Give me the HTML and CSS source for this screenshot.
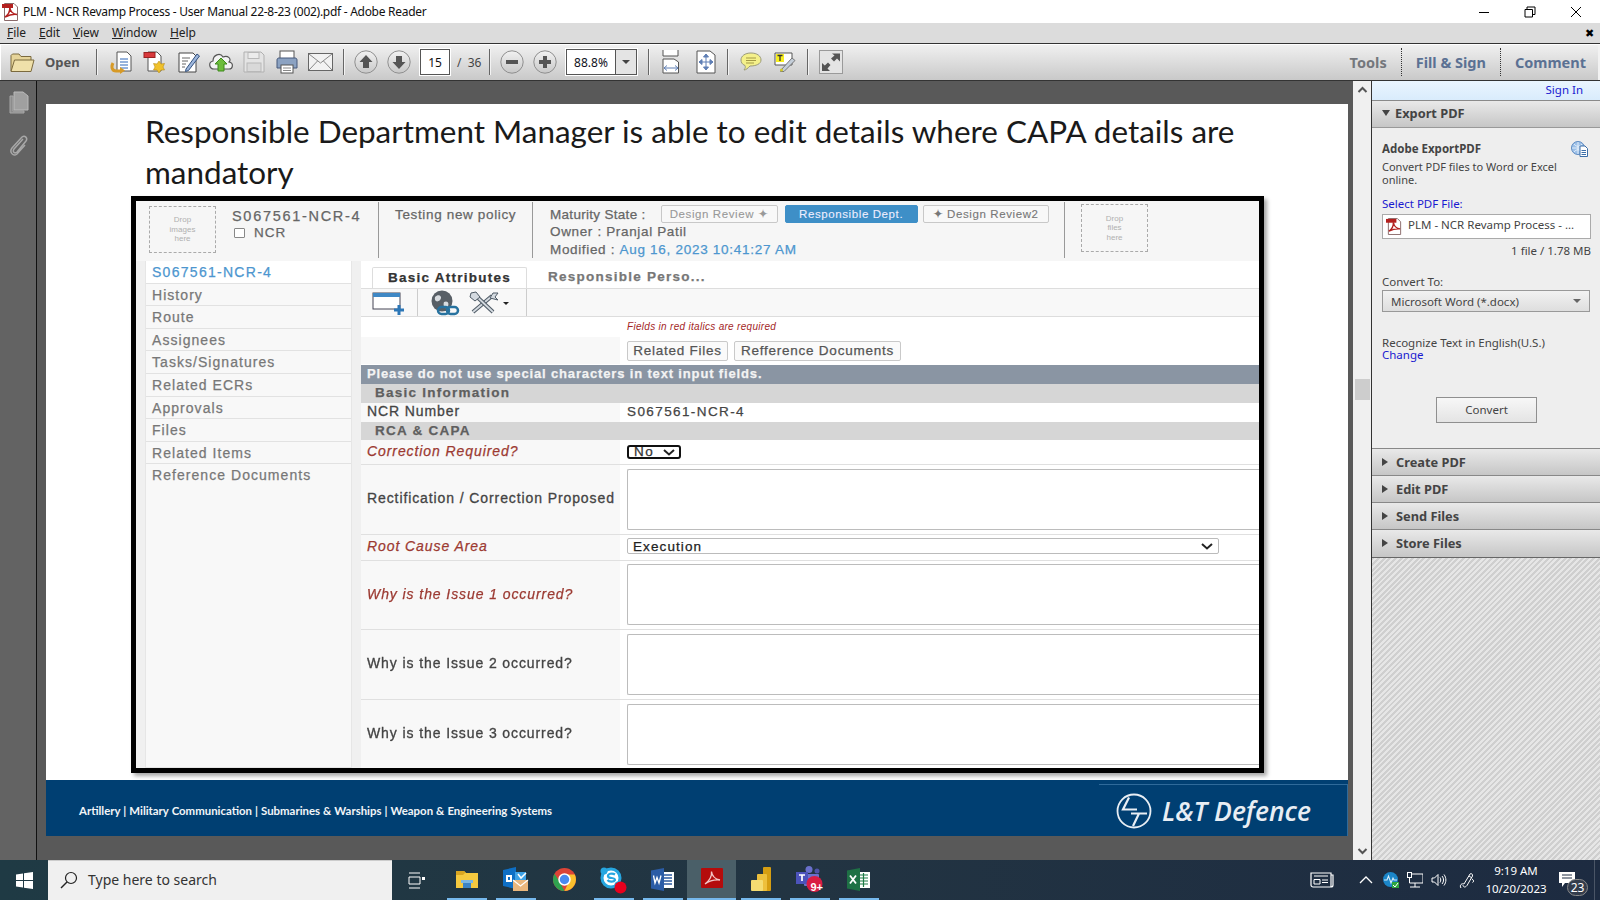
FILE: index.html
```html
<!DOCTYPE html>
<html lang="en">
<head>
<meta charset="utf-8">
<title>Adobe Reader</title>
<link rel="stylesheet" href="styles.css">
</head>
<body>
<svg class="defs" width="0" height="0">
  <defs>
    <symbol id="pdfdoc" viewBox="0 0 18 18">
      <path d="M2.5 .5H12L15.5 4V17.5H2.5Z" fill="#fff" stroke="#8a6a6a"/>
      <rect x="0" y="1" width="11" height="4" fill="#b3201f"/>
      <path d="M3 14C6 12 8 8 7.800 4.500C8.500 9 11 11 15 11.500C11 11 6 12.500 3 14Z" fill="none" stroke="#b3201f" stroke-width="1.500"/>
    </symbol>
    <symbol id="tray-circle" viewBox="0 0 24 24">
      <circle cx="12" cy="12" r="11.200" fill="url(#circ)" stroke="#8f8f8f" stroke-width="1"/>
    </symbol>
    <linearGradient id="circ" x1="0" y1="0" x2="0" y2="1"><stop offset="0" stop-color="#f2f2f2"/><stop offset="1" stop-color="#c8c8c8"/></linearGradient>
  </defs>
</svg>

<header class="titlebar">
  <svg class="title-icon" width="18" height="18"><use href="#pdfdoc"/></svg>
  <span class="title-text">PLM - NCR Revamp Process - User Manual 22-8-23 (002).pdf - Adobe Reader</span>
  <div class="winctl">
    <svg width="12" height="12" viewBox="0 0 12 12"><path d="M1 6.500H11" stroke="#000"/></svg>
    <svg width="12" height="12" viewBox="0 0 12 12"><path d="M3 3V1H11V8.500H9M1 3.500H8.500V11H1Z" fill="none" stroke="#000"/></svg>
    <svg width="12" height="12" viewBox="0 0 12 12"><path d="M1 1L11 11M11 1L1 11" stroke="#000"/></svg>
  </div>
</header>

<nav class="menubar">
  <span class="menu m-file"><u>F</u>ile</span>
  <span class="menu m-edit"><u>E</u>dit</span>
  <span class="menu m-view"><u>V</u>iew</span>
  <span class="menu m-window"><u>W</u>indow</span>
  <span class="menu m-help"><u>H</u>elp</span>
  <span class="menu-close">✖</span>
</nav>

<div class="toolbar">
  <div class="g-open">
    <svg width="25" height="21" viewBox="0 0 25 21"><path d="M1 19V3.500L2.500 2H9L11 4.500H21V8" fill="#e6d49a" stroke="#7b6a3e"/><path d="M1 19.500L4.500 8H24L21 19.500Z" fill="#efe0aa" stroke="#7b6a3e"/></svg>
    <span class="open-label">Open</span>
  </div>
  <i class="sep"></i>
  <div class="g-file">
    <span class="tbtn"><svg width="24" height="24" viewBox="0 0 24 24"><path d="M7 2H17L21 6V21H7Z" fill="#fff" stroke="#555"/><path d="M10 9H18M10 12H18M10 15H18M10 18H18" stroke="#2f66b8"/><path d="M11 21H6C2 21 1 17 3 13" fill="none" stroke="#d79a27" stroke-width="3"/><path d="M10 17V24L15 20.500Z" fill="#d79a27"/></svg></span>
    <span class="tbtn"><svg width="24" height="24" viewBox="0 0 24 24"><path d="M5 2H14L18 6V21H5Z" fill="#fff" stroke="#555"/><rect x="1" y="2.500" width="11" height="5" fill="#d8393c" stroke="#922"/><path d="M16 11L18 14L21.500 13.500L20 17L21.500 20L18 20L16 23L14 20L10.500 20L12 17L10.500 13.500L14 14Z" fill="#f0c12b" stroke="#b98d14" stroke-width=".6"/></svg></span>
    <span class="tbtn"><svg width="24" height="24" viewBox="0 0 24 24"><path d="M3 3H17L20 6V22H3Z" fill="#fff" stroke="#444"/><path d="M6 8H14M6 11H12M6 14H10M6 17H9" stroke="#666"/><path d="M10 19L21 4L23.500 6L12.500 20.500L9.500 21.500Z" fill="#9db6dc" stroke="#33527f"/></svg></span>
    <span class="tbtn"><svg width="26" height="24" viewBox="0 0 26 24"><path d="M6 19C1 19 0 12 5 11C5 5 12 2 15 7C20 5 24 9 21 12C26 13 25 19 21 19Z" fill="#f4f4f4" stroke="#555" stroke-width="1.200"/><path d="M13 8L19 14H16V21H10V14H7Z" fill="#6dbd3c" stroke="#3e8a1c"/></svg></span>
    <span class="tbtn"><svg width="22" height="22" viewBox="0 0 22 22"><path d="M1 1H18L21 4V21H1Z" fill="#e4e4e4" stroke="#b0b0b0"/><rect x="5" y="1.500" width="11" height="6" fill="#ececec" stroke="#b8b8b8"/><rect x="4" y="12" width="14" height="8.500" fill="#d9d9d9" stroke="#b8b8b8"/></svg></span>
    <span class="tbtn"><svg width="24" height="24" viewBox="0 0 24 24"><rect x="5" y="1" width="14" height="9" fill="#fff" stroke="#555"/><path d="M2 10C2 8.500 3 8 4 8H20C21 8 22 8.500 22 10V18H2Z" fill="#8ba2c2" stroke="#46597a"/><rect x="6" y="15" width="12" height="8" fill="#fff" stroke="#555"/><path d="M8 18H16M8 20.500H16" stroke="#888"/></svg></span>
    <span class="tbtn"><svg width="25" height="18" viewBox="0 0 25 18"><rect x=".5" y=".5" width="24" height="17" fill="#f2f2f2" stroke="#666"/><path d="M1 1L12.500 10L24 1M1 17L9.500 8M24 17L15.500 8" fill="none" stroke="#888"/></svg></span>
  </div>
  <i class="sep"></i>
  <div class="g-nav">
    <svg width="24" height="24" viewBox="0 0 24 24"><use href="#tray-circle"/><path d="M12 5L18.500 12H15V18H9V12H5.500Z" fill="#555"/></svg>
    <svg width="24" height="24" viewBox="0 0 24 24"><use href="#tray-circle"/><path d="M12 19L18.500 12H15V6H9V12H5.500Z" fill="#555"/></svg>
    <span class="pagebox">15</span>
    <span class="pagecount">/ &nbsp;36</span>
  </div>
  <i class="sep"></i>
  <div class="g-zoom">
    <svg width="24" height="24" viewBox="0 0 24 24"><use href="#tray-circle"/><rect x="6" y="10" width="12" height="4" fill="#555"/></svg>
    <svg width="24" height="24" viewBox="0 0 24 24"><use href="#tray-circle"/><path d="M10 6H14V10H18V14H14V18H10V14H6V10H10Z" fill="#555"/></svg>
    <div class="zoombox"><span class="zoomval">88.8%</span><span class="zoomdrop"><i class="caret"></i></span></div>
  </div>
  <i class="sep"></i>
  <div class="g-fit">
    <span class="tbtn"><svg width="18" height="24" viewBox="0 0 18 24"><path d="M1 0V6H16V0" fill="#fff" stroke="#555"/><path d="M1 9H12L16.500 12V23H1Z" fill="#fff" stroke="#555"/><path d="M2 18H16M2 18L5 15.500M2 18L5 20.500M16 18L13 15.500M16 18L13 20.500" stroke="#5f7fb5" fill="none"/></svg></span>
    <span class="tbtn"><svg width="20" height="24" viewBox="0 0 20 24"><path d="M1 1H14L19 5V23H1Z" fill="#fff" stroke="#555"/><path d="M10 4V20M3 12H17M10 4L7.500 7H12.500ZM10 20L7.500 17H12.500ZM3 12L6 9.500V14.500ZM17 12L14 9.500V14.500Z" fill="#5f7fb5" stroke="#5f7fb5"/></svg></span>
  </div>
  <i class="sep"></i>
  <div class="g-note">
    <span class="tbtn"><svg width="22" height="20" viewBox="0 0 22 20"><path d="M11 1C17 1 21 4 21 8C21 12 16 14 10 14C8 16 6 18 4 18C5.500 16 5.500 15 5 13.500C2 12.500 1 10 1 8C1 4 5 1 11 1Z" fill="#f4f08a" stroke="#9a9a7a"/><path d="M6 6H16M6 8.500H16M6 11H14" stroke="#a49a46"/></svg></span>
    <span class="tbtn"><svg width="22" height="20" viewBox="0 0 22 20"><path d="M1 1H18V13H1Z" fill="#fff" stroke="#555"/><rect x="2" y="2" width="8" height="8" fill="#f7ee1f"/><path d="M3.500 3.500H8.500M6 3.500V9" stroke="#333" stroke-width="1.300"/><path d="M7 18L18 6L21 8.500L10 19.500L6.500 19.500Z" fill="#c4ced9" stroke="#777"/><circle cx="7.500" cy="18" r="1.500" fill="#cfc52a"/></svg></span>
  </div>
  <i class="sep"></i>
  <span class="expand"><svg width="24" height="24" viewBox="0 0 24 24"><rect x=".5" y=".5" width="23" height="23" fill="#e4e4e4" stroke="#9a9a9a"/><path d="M13 3.500H21V11.500L18 8.500L15 11.500L12 8.500L15.500 5.500ZM3 21V13L5.800 15.500L9 12.500L11.500 15L8.500 18.500L11 21Z" fill="#555"/></svg></span>
  <div class="tabs-right">
    <span class="tr-link tr-tools">Tools</span>
    <i class="dots"></i>
    <span class="tr-link">Fill &amp; Sign</span>
    <i class="dots"></i>
    <span class="tr-link">Comment</span>
  </div>
</div>

<div class="main">
  <aside class="rail">
    <svg width="22" height="24" viewBox="0 0 22 24"><path d="M2 6H5V21H16V23H2Z" fill="#8c8c8c" stroke="#a8a8a8"/><path d="M6 2H15L20 6V20H6Z" fill="#a0a0a0" stroke="#bababa"/></svg>
    <svg width="22" height="24" viewBox="0 0 22 24"><path d="M15 6L6 16C4 19 7 21 9 19L18 8C20 5 17 2 14 4L4 15C1 19 5 24 9 21L17 12" fill="none" stroke="#a8a8a8" stroke-width="1.500"/></svg>
  </aside>

  <section class="docarea">
    <article class="page">
      <h1 class="heading">Responsible Department Manager is able to edit details where CAPA details are mandatory</h1>
      <figure class="shot">
        <div class="shot-inner">
          <div class="hdr">
            <div class="drop drop-img">Drop<br>images<br>here</div>
            <div class="idblock">
              <div class="idname">S067561-NCR-4</div>
              <div class="idtype"><i class="minidoc"></i>NCR</div>
            </div>
            <div class="desc">Testing new policy</div>
            <div class="state">
              <div class="state-row"><span class="state-label">Maturity State :</span>
                <span class="chip chip-a">Design Review ✦</span>
                <span class="chip chip-on">Responsible Dept.</span>
                <span class="chip chip-b">✦ Design Review2</span>
              </div>
              <div class="state-line">Owner : Pranjal Patil</div>
              <div class="state-line">Modified : <span class="blue">Aug 16, 2023 10:41:27 AM</span></div>
            </div>
            <div class="drop drop-file">Drop<br>files<br>here</div>
          </div>
          <div class="content">
            <ul class="sidenav">
              <li class="current">S067561-NCR-4</li>
              <li>History</li>
              <li>Route</li>
              <li>Assignees</li>
              <li>Tasks/Signatures</li>
              <li>Related ECRs</li>
              <li>Approvals</li>
              <li>Files</li>
              <li>Related Items</li>
              <li class="lastnav">Reference Documents</li>
            </ul>
            <div class="form">
              <div class="tabs">
                <span class="tab tab-on">Basic Attributes</span>
                <span class="tab tab-off">Responsible Perso...</span>
              </div>
              <div class="actions">
                <svg class="act1" width="33" height="26" viewBox="0 0 33 26"><rect x="1" y="3" width="27" height="16" fill="#fff" stroke="#445"/><rect x="1" y="3" width="27" height="4" fill="#3f88c5"/><path d="M22 20H32M27 15V25" stroke="#2c77b7" stroke-width="3"/></svg>
                <i class="act-sep act-sep1"></i>
                <svg class="act2" width="32" height="26" viewBox="0 0 32 26"><circle cx="14" cy="11" r="10.500" fill="#585f66"/><path d="M7 7C11 3 15 7 12 10C9 13 6 11 7 7ZM16 12C20 10 22 14 19 18C16 19 15 15 16 12Z" fill="#d8dce0"/><rect x="10" y="17" width="11" height="7" rx="3.500" fill="none" stroke="#27729f" stroke-width="2.500"/><rect x="19" y="17" width="11" height="7" rx="3.500" fill="none" stroke="#27729f" stroke-width="2.500"/></svg>
                <svg class="act3" width="42" height="24" viewBox="0 0 42 24"><path d="M5 21L24 5" stroke="#4f5b66" stroke-width="4"/><path d="M5 21L24 5" stroke="#d4dae0" stroke-width="1.800"/><path d="M6 3L25 21" stroke="#4f5b66" stroke-width="4"/><path d="M6 3L25 21" stroke="#d4dae0" stroke-width="1.800"/><path d="M3 2L8 1L12 6L7 10L2 6ZM22 7L25 2L30 2L27 6L30 9Z" fill="#d4dae0" stroke="#4f5b66"/><path d="M35 11H41L38 14Z" fill="#222"/></svg>
                <i class="act-sep act-sep2"></i>
              </div>
              <div class="req-row"><span class="req">Fields in red italics are required</span></div>
              <div class="btn-row">
                <span class="btn-cell"></span>
                <span class="sbtn sbtn-a">Related Files</span>
                <span class="sbtn sbtn-b">Refference Documents</span>
              </div>
              <div class="notice">Please do not use special characters in text input fields.</div>
              <div class="band">Basic Information</div>
              <div class="row r-ncr"><div class="lbl lbl-bold">NCR Number</div><div class="val">S067561-NCR-4</div></div>
              <div class="band">RCA &amp; CAPA</div>
              <div class="row r-cor"><div class="lbl lbl-red">Correction Required?</div><div class="val"><span class="sel-no">No<svg width="12" height="7" viewBox="0 0 12 7"><path d="M1 1L6 5.500L11 1" fill="none" stroke="#222" stroke-width="2"/></svg></span></div></div>
              <div class="row r-area"><div class="lbl lbl-bold">Rectification / Correction Proposed</div><div class="val"><span class="ta"></span></div></div>
              <div class="row r-root"><div class="lbl lbl-red">Root Cause Area</div><div class="val"><span class="sel-root">Execution<svg width="12" height="7" viewBox="0 0 12 7"><path d="M1 1L6 5.500L11 1" fill="none" stroke="#222" stroke-width="2"/></svg></span></div></div>
              <div class="row r-area"><div class="lbl lbl-red">Why is the Issue 1 occurred?</div><div class="val"><span class="ta"></span></div></div>
              <div class="row r-area"><div class="lbl lbl-bold">Why is the Issue 2 occurred?</div><div class="val"><span class="ta"></span></div></div>
              <div class="row r-area r-last"><div class="lbl lbl-bold">Why is the Issue 3 occurred?</div><div class="val"><span class="ta"></span></div></div>
            </div>
          </div>
        </div>
      </figure>
      <footer class="pagefoot">
        <span class="foot-text">Artillery | Military Communication | Submarines &amp; Warships | Weapon &amp; Engineering Systems</span>
        <div class="foot-logo">
          <svg width="36" height="36" viewBox="0 0 36 36"><circle cx="18" cy="18" r="16.500" fill="none" stroke="#e8eef4" stroke-width="1.800"/><path d="M13 4.500L7 16.500H21M15 20.500H31M23 20.500L17 33" fill="none" stroke="#e8eef4" stroke-width="2.200"/></svg>
          <span class="foot-brand">L&amp;T Defence</span>
        </div>
      </footer>
    </article>
  </section>

  <div class="vscroll">
    <svg width="11" height="8" viewBox="0 0 11 8"><path d="M1.500 6L5.500 2L9.500 6" fill="none" stroke="#555" stroke-width="2"/></svg>
    <i class="thumb"></i>
    <svg width="11" height="8" viewBox="0 0 11 8"><path d="M1.500 2L5.500 6L9.500 2" fill="none" stroke="#555" stroke-width="2"/></svg>
  </div>

  <aside class="panel">
    <div class="signin"><span>Sign In</span></div>
    <div class="sect sect-open"><i class="tri-down"></i>Export PDF</div>
    <div class="export">
      <div class="ex-head"><b>Adobe ExportPDF</b>
        <svg width="17" height="16" viewBox="0 0 17 16"><circle cx="7" cy="7" r="6.500" fill="#9cc0e8" stroke="#5d8ac0"/><path d="M1 7H13M7 1V13M3 3C5 6 9 6 11 3M3 11C5 8 9 8 11 11" fill="none" stroke="#fff" stroke-width=".7"/><path d="M9 5H14L16.500 7.500V15.500H9Z" fill="#fff" stroke="#3c6ea8"/><path d="M10.500 9.500H15M10.500 11.500H15M10.500 13.500H15" stroke="#3c6ea8"/></svg>
      </div>
      <p class="ex-desc">Convert PDF files to Word or Excel online.</p>
      <div class="ex-link ex-select">Select PDF File:</div>
      <div class="filebox"><svg width="17" height="17"><use href="#pdfdoc"/></svg><span>PLM - NCR Revamp Process - ...</span></div>
      <div class="filesize">1 file / 1.78 MB</div>
      <div class="ex-label">Convert To:</div>
      <div class="convsel"><span>Microsoft Word (*.docx)</span><i class="caret caret-light"></i></div>
      <div class="ex-rec">Recognize Text in English(U.S.)</div>
      <div class="ex-link ex-change">Change</div>
      <div class="convert">Convert</div>
    </div>
    <div class="sect"><i class="tri-right"></i>Create PDF</div>
    <div class="sect"><i class="tri-right"></i>Edit PDF</div>
    <div class="sect"><i class="tri-right"></i>Send Files</div>
    <div class="sect sect-last"><i class="tri-right"></i>Store Files</div>
    <div class="hatch"></div>
  </aside>
</div>

<footer class="taskbar">
  <div class="start"><svg width="17" height="17" viewBox="0 0 17 17"><path d="M0 2.500L7 1.500V8H0ZM8 1.300L17 0V8H8ZM0 9H7V15.500L0 14.500ZM8 9H17V17L8 15.700Z" fill="#fff"/></svg></div>
  <div class="search">
    <svg width="18" height="18" viewBox="0 0 18 18"><circle cx="11" cy="7" r="5.500" fill="none" stroke="#222" stroke-width="1.200"/><path d="M7 11L1 17" stroke="#222" stroke-width="1.400"/></svg>
    <span>Type here to search</span>
  </div>
  <div class="taskview"><svg width="17" height="17" viewBox="0 0 17 17"><path d="M1 1H12M1 16H12M1 5H12V12H1Z" fill="none" stroke="#fff"/><rect x="14" y="5" width="3" height="3" fill="#fff"/></svg></div>
  <div class="slot"><span class="slot-ico"><svg width="22" height="20" viewBox="0 0 22 20"><path d="M0 2H8L10 4H22V19H0Z" fill="#f5c93f"/><path d="M0 2H8L10 4H9L7 6H0Z" fill="#d9a521"/><rect x="7" y="13" width="8" height="6" fill="#3b83c6"/><rect x="5" y="11" width="12" height="3" fill="#7ab6e4"/></svg></span><i class="bar"></i></div>
  <div class="slot"><span class="slot-ico"><svg width="26" height="24" viewBox="0 0 26 24"><path d="M0 3L13 0V22L0 19Z" fill="#0e6fc5"/><rect x="12" y="5" width="11" height="9" fill="#3ea2e6"/><path d="M3 8H9V15H3ZM5 10H7V13H5Z" fill="#fff" fill-rule="evenodd"/><path d="M15 7L18 11L23 6" fill="none" stroke="#fff" stroke-width="1.500"/><rect x="10" y="13" width="15" height="11" fill="#eab77d"/><path d="M10 13L17.500 19L25 13" fill="none" stroke="#fff" stroke-width="1.200"/></svg></span><i class="bar"></i></div>
  <div class="slot"><span class="slot-ico"><svg width="23" height="23" viewBox="0 0 23 23"><circle cx="11.500" cy="11.500" r="11.500" fill="#dc4437"/><path d="M11.500 23A11.500 11.500 0 0 1 1.500 5.800L7 14.500L11.500 23Z" fill="#2fa24f"/><path d="M11.500 23A11.500 11.500 0 0 0 21.800 6.500H11.500L16 13.500Z" fill="#fbc02d"/><circle cx="11.500" cy="11.500" r="5.500" fill="#4a8af0" stroke="#fff" stroke-width="1.500"/></svg></span><i class="bar bar-none"></i></div>
  <div class="slot"><span class="slot-ico slot-down"><svg width="27" height="27" viewBox="0 0 27 27"><circle cx="11" cy="11" r="9" fill="#fff" stroke="#26a6e0" stroke-width="3"/><circle cx="4" cy="4" r="3.500" fill="#26a6e0"/><circle cx="18" cy="18" r="3.500" fill="#26a6e0"/><path d="M15 7.500C12 5.500 7.500 7 8 9.500C9 12 15 10 15 13C14 15.500 9 15 7.500 13" fill="none" stroke="#26a6e0" stroke-width="2.200"/><circle cx="20.500" cy="20.500" r="6" fill="#e8001d"/></svg></span><i class="bar"></i></div>
  <div class="slot"><span class="slot-ico"><svg width="23" height="23" viewBox="0 0 23 23"><rect x="9" y="4" width="14" height="16" fill="#fff"/><path d="M12 7H21M12 10H21M12 13H21M12 16H21" stroke="#2b5aa0" stroke-width="1.500"/><path d="M0 2.500L13 0V23L0 20.500Z" fill="#2b5ca6"/><path d="M2.500 7.500L4 15L6 9.500L8 15L10 7.500" fill="none" stroke="#fff" stroke-width="1.300"/></svg></span><i class="bar"></i></div>
  <div class="slot slot-active"><span class="slot-ico"><svg width="22" height="22" viewBox="0 0 22 22"><rect width="22" height="20" rx="1" fill="#b40c0c"/><path d="M4 16C8 13 11 8 10.500 3.500C11 8 14 11 19 12C14 11.500 8 13 4 16Z" fill="none" stroke="#f3c6c6" stroke-width="1.300"/></svg></span><i class="bar"></i></div>
  <div class="slot"><span class="slot-ico"><svg width="20" height="24" viewBox="0 0 20 24"><rect x="12" y="0" width="8" height="24" rx="1" fill="#d69e12"/><rect x="6" y="7" width="10" height="17" rx="1" fill="#eec03c"/><rect x="0" y="13" width="12" height="11" rx="1" fill="#f5dc72"/></svg></span><i class="bar"></i></div>
  <div class="slot"><span class="slot-ico"><svg width="27" height="26" viewBox="0 0 27 26"><circle cx="13" cy="3.500" r="3.500" fill="#6a70cc"/><circle cx="21" cy="5" r="2.500" fill="#4e54a8"/><rect x="8" y="8" width="15" height="12" rx="1" fill="#6a70cc"/><rect x="0" y="6" width="12" height="12" fill="#4c53bb"/><path d="M3 9H9M6 9V15" stroke="#fff" stroke-width="1.700"/><circle cx="18.500" cy="18" r="8" fill="#d91d44"/></svg><b class="teams-badge">9+</b></span><i class="bar"></i></div>
  <div class="slot"><span class="slot-ico"><svg width="23" height="23" viewBox="0 0 23 23"><rect x="9" y="4" width="14" height="16" fill="#fff"/><path d="M13 7H21M13 10H21M13 13H21M13 16H21M16.500 5V19" stroke="#1d7a46" stroke-width="1.200"/><path d="M0 2.500L13 0V23L0 20.500Z" fill="#1e7145"/><path d="M3 7.500L9 15.500M9 7.500L3 15.500" stroke="#fff" stroke-width="1.800"/></svg></span><i class="bar"></i></div>
  <div class="tray">
    <svg class="t-news" width="24" height="16" viewBox="0 0 24 16"><path d="M1 1H21V15H3C2 15 1 14 1 13ZM21 3H23V13C23 14 22 15 21 15" fill="none" stroke="#fff" stroke-width="1.200"/><path d="M4 4H18M4 7.500H10V12H4ZM12 8H18M12 10.500H18" fill="none" stroke="#fff"/></svg>
    <svg class="t-caret" width="14" height="8" viewBox="0 0 14 8"><path d="M1 7L7 1L13 7" fill="none" stroke="#fff" stroke-width="1.300"/></svg>
    <svg class="t-mon" width="16" height="16" viewBox="0 0 16 16"><circle cx="7.500" cy="7.500" r="7.500" fill="#1b86c9"/><path d="M1 8H4L5.500 4L8 11L10 6L11 8H14" fill="none" stroke="#d7eefb" stroke-width="1.100"/><rect x="9" y="10" width="7" height="6" fill="#2da53f"/><path d="M10 13L12 15L15 11" fill="none" stroke="#fff"/></svg>
    <svg class="t-net" width="16" height="16" viewBox="0 0 16 16"><path d="M5 2H16V11H5M8 11V15M3 15H13" fill="none" stroke="#fff"/><rect x=".5" y=".5" width="4" height="5" fill="#1e2d42" stroke="#fff"/><path d="M2.500 6V11H5" fill="none" stroke="#fff"/></svg>
    <svg class="t-vol" width="16" height="14" viewBox="0 0 16 14"><path d="M1 5H3.500L7 1.500V12.500L3.500 9H1Z" fill="none" stroke="#fff"/><path d="M9 4.500C10 6 10 8 9 9.500M11 3C13 5.500 13 8.500 11 11M13 1.500C15.500 5 15.500 9 13 12.500" fill="none" stroke="#fff"/></svg>
    <svg class="t-pen" width="16" height="17" viewBox="0 0 16 17"><path d="M2 16C0 13 3 11 5 12L11 2C12 1 14 2 13.500 4L8 13.500C6 16 4 15 4 13M10 4L13 6M13 7C15 8 15 10 13.500 10.500" fill="none" stroke="#fff"/></svg>
    <div class="clock"><span>9:19 AM</span><span>10/20/2023</span></div>
    <div class="notif"><svg width="18" height="15" viewBox="0 0 18 15"><path d="M0 0H16V11H6L3 15V11H0Z" fill="#fff"/><path d="M3 3H13M3 6H13" stroke="#1e2d42"/></svg><span class="notif-badge">23</span></div>
    <i class="showdesk"></i>
  </div>
</footer>
</body>
</html>
```

FILE: styles.css
```css
* { box-sizing: border-box; }
html, body { margin: 0; padding: 0; }
body {
  width: 1600px;
  height: 900px;
  overflow: hidden;
  display: flex;
  flex-direction: column;
  background: #fff;
  font-family: "Noto Sans", "Open Sans", sans-serif;
  color: #222;
}
.defs { display: block; height: 0; }

/* title + menu */
.titlebar { height: 23px; flex: none; display: flex; align-items: center; background: #fff; }
.title-icon { margin-left: 2px; flex: none; }
.title-text { margin-left: 3px; font-size: 12px; letter-spacing: -.28px; color: #111; white-space: nowrap; }
.winctl { margin-left: auto; display: flex; width: 132px; gap: 34px; padding-left: 10px; }
.menubar { height: 20px; flex: none; display: flex; align-items: center; padding-bottom: 2px; background: #dcdcdc; font-size: 12px; letter-spacing: -.1px; color: #222; }
.menu u { text-decoration-thickness: 1px; }
.m-file { margin-left: 7px; width: 32px; }
.m-edit { width: 34px; }
.m-view { width: 39px; }
.m-window { width: 58px; }
.m-help { width: 30px; }
.menu-close { margin-left: auto; margin-right: 6px; font-size: 11px; color: #000; }

/* toolbar */
.toolbar {
  height: 38px;
  flex: none;
  display: flex;
  align-items: center;
  background: linear-gradient(#f1f1f1, #c9c9c9);
  border-top: 1px solid #333;
  border-bottom: 1px solid #333;
  box-shadow: inset 0 1px 0 #fff, inset 1px 0 0 #fff, inset -2px 0 0 #f2f2f2;
}
.sep { flex: none; width: 1px; height: 26px; background: #666; box-shadow: 1px 0 0 #f3f3f3; }
.g-open { flex: none; width: 96px; padding-left: 10px; display: flex; align-items: center; gap: 10px; }
.open-label { font-size: 13px; font-weight: 700; color: #555; }
.tbtn { flex: none; width: 32px; height: 30px; display: flex; align-items: center; justify-content: center; }
.g-file { flex: none; margin: 0 7px 0 9px; display: flex; gap: 1px; }
.g-nav { flex: none; margin: 0 0 0 10px; display: flex; align-items: center; gap: 9px; }
.pagebox { width: 30px; height: 26px; border: 1px solid #555; outline: 1px solid #fff; background: #fff; font-size: 12px; color: #111; display: flex; align-items: center; justify-content: center; }
.pagecount { margin-left: -2px; width: 32px; font-size: 12px; color: #444; white-space: nowrap; }
.g-zoom { flex: none; margin: 0 11px 0 10px; display: flex; align-items: center; gap: 9px; }
.zoombox { width: 71px; height: 26px; display: flex; border: 1px solid #555; outline: 1px solid #fff; background: #fff; }
.zoomval { width: 48px; font-size: 12px; color: #112; display: flex; align-items: center; justify-content: center; }
.zoomdrop { flex: 1; background: #e4e4e4; border-left: 1px solid #555; display: flex; align-items: center; justify-content: center; }
.caret { width: 0; height: 0; border: 4px solid transparent; border-top: 4px solid #444; border-bottom: 0; }
.g-fit { flex: none; margin: 0 5px 0 6px; display: flex; gap: 3px; }
.g-note { flex: none; margin: 0 6px 0 7px; display: flex; gap: 2px; }
.expand { flex: none; margin-left: 11px; display: flex; }
.tabs-right { margin-left: auto; display: flex; align-items: center; margin-right: 14px; }
.tr-link { font-size: 14.500px; font-weight: 700; color: #5b7193; }
.tr-tools { color: #74777c; }
.dots { width: 1px; height: 28px; margin: 0 14px; border-left: 1px dotted #333; }

/* main */
.main { flex: none; height: 779px; display: flex; background: #595959; }
.rail { flex: none; width: 37px; background: #636363; border-right: 1px solid #111; display: flex; flex-direction: column; align-items: center; gap: 19px; padding: 9px 0 0 1px; }
.docarea { flex: 1; padding: 23px 0 0 9px; min-width: 0; }
.page { width: 1302px; height: 732px; background: #fff; display: flex; flex-direction: column; }
.heading {
  margin: 0;
  padding: 7px 40px 0 99px;
  height: 92px;
  font-family: "Lato", "Open Sans", sans-serif;
  font-weight: 400;
  font-size: 31.450px;
  line-height: 41px;
  color: #1a1a1a;
}
.shot { flex: none; margin: 0 0 0 85px; width: 1133px; height: 577px; border: 5px solid #000; box-shadow: 3px 3px 4px rgba(0,0,0,.35); background: #f7f7f7; overflow: hidden; }
.shot-inner { width: 1123px; height: 567px; filter: blur(.45px); font-family: "Liberation Sans", Arial, sans-serif; font-size: 14px; color: #666; letter-spacing: .55px; -webkit-text-stroke: .25px; }

.hdr { height: 60px; display: flex; background: #f6f6f6; }
.drop { flex: none; border: 1px dashed #aaa; font-size: 8px; line-height: 9.500px; color: #b0b0b0; text-align: center; letter-spacing: 0; -webkit-text-stroke: 0; display: flex; align-items: center; justify-content: center; }
.drop-img { margin: 5px 0 0 13px; width: 67px; height: 47px; }
.drop-file { margin: 3px 0 0 16px; width: 67px; height: 48px; }
.idblock { flex: none; margin-left: 16px; width: 146px; padding-top: 7px; }
.idname { font-size: 14.500px; letter-spacing: 1.700px; line-height: 16px; color: #666; white-space: nowrap; }
.idtype { padding-left: 2px; line-height: 17px; font-size: 13.500px; letter-spacing: 1px; color: #666; display: flex; align-items: center; gap: 9px; }
.minidoc { width: 11px; height: 10px; border: 1px solid #888; background: #fff; border-radius: 1px; }
.desc { flex: none; width: 154px; height: 56px; margin-top: 1px; border-left: 1px solid #999; padding: 5px 0 0 16px; font-size: 13.500px; color: #666; white-space: nowrap; letter-spacing: .65px; }
.state { flex: none; width: 533px; height: 56px; margin-top: 1px; border-left: 1px solid #999; border-right: 1px solid #999; padding: 3px 0 0 17px; font-size: 13.500px; color: #666; letter-spacing: .65px; }
.state-row { display: flex; align-items: center; height: 18px; white-space: nowrap; }
.state-label { letter-spacing: .3px; }
.state-line { height: 18px; line-height: 18px; white-space: nowrap; }
.blue { color: #4d96cf; letter-spacing: .72px; }
.chip { display: flex; align-items: center; justify-content: center; height: 18px; border: 1px solid #c8c8c8; border-radius: 2px; background: #f8f8f8; font-size: 11.500px; letter-spacing: .6px; -webkit-text-stroke: .1px; color: #999; }
.chip-a { margin-left: 15px; width: 117px; }
.chip-on { margin-left: 7px; width: 133px; background: #3e8fc7; border-color: #3e8fc7; color: #eef; }
.chip-b { margin-left: 5px; width: 126px; color: #777; }

.content { height: 507px; display: flex; background: #f0f0f0; }
.sidenav { flex: none; margin: 0 9px 0 9px; padding: 0; width: 207px; list-style: none; background: #f8f8f8; border: 1px solid #e6e6e6; border-top: 0; }
.sidenav li { height: 22.600px; line-height: 23px; padding-left: 6px; border-bottom: 1px solid #e2e2e2; color: #777; letter-spacing: 1.050px; white-space: nowrap; }
.sidenav .current { background: #fff; color: #4d96cf; letter-spacing: 1.280px; }
.sidenav .lastnav { border-bottom: 0; }

.form { flex: 1; min-width: 0; background: #fff; display: flex; flex-direction: column; }
.tabs { height: 28px; flex: none; display: flex; align-items: flex-end; padding-left: 11px; border-bottom: 1px solid #ddd; }
.tab { height: 21px; line-height: 20px; font-weight: 700; font-size: 13.500px; letter-spacing: 1.250px; white-space: nowrap; }
.tab-on { width: 155px; text-align: center; color: #333; background: #fff; border: 1px solid #ddd; border-bottom: 0; border-radius: 2px 2px 0 0; }
.tab-off { margin-left: 21px; color: #777; }
.actions { height: 28px; flex: none; display: flex; align-items: center; background: #f8f8f8; border-bottom: 1px solid #ddd; padding-left: 11px; }
.act-sep { width: 1px; height: 27px; background: #ccc; }
.act-sep1 { margin-left: 12px; }
.act2 { margin-left: 10px; }
.act3 { margin-left: 8px; }
.act-sep2 { margin-left: 16px; }
.req-row { height: 20px; flex: none; padding-left: 266px; }
.req { font-size: 10px; font-style: italic; color: #a3261f; letter-spacing: .3px; line-height: 16px; -webkit-text-stroke: 0; }
.btn-row { height: 28px; flex: none; display: flex; align-items: center; padding-bottom: 1px; }
.btn-cell { width: 259px; height: 100%; background: #f8f8f8; }
.sbtn { height: 20px; display: flex; align-items: center; justify-content: center; border: 1px solid #c9c9c9; border-radius: 2px; font-size: 13.500px; color: #555; background: #fafafa; letter-spacing: .75px; white-space: nowrap; }
.sbtn-a { margin-left: 7px; width: 101px; }
.sbtn-b { margin-left: 6px; width: 167px; }
.notice { height: 19px; flex: none; line-height: 18px; padding-left: 6px; background: #8a95a3; color: #f3f3f3; font-weight: 700; font-size: 13px; letter-spacing: .85px; white-space: nowrap; }
.band { height: 18.500px; flex: none; line-height: 18px; padding-left: 14px; background: #d6d6d6; color: #5f5f5f; font-weight: 700; font-size: 13.500px; letter-spacing: 1.250px; }
.row { flex: none; display: flex; border-bottom: 1px solid #e0e0e0; }
.lbl { flex: none; width: 259px; padding: 0 0 2px 6px; background: #f8f8f8; display: flex; align-items: center; white-space: nowrap; }
.lbl-bold { color: #444; font-size: 14px; letter-spacing: .900px; -webkit-text-stroke: .3px; }
.lbl-red { color: #9c3a32; font-style: italic; font-size: 14px; letter-spacing: .920px; }
.val { flex: 1; min-width: 0; padding-left: 7px; display: flex; align-items: center; color: #444; letter-spacing: 1.400px; font-size: 13.500px; }
.r-ncr { height: 19px; border-bottom: 0; }
.r-ncr .val, .r-root .val { padding-bottom: 2px; }
.r-cor { height: 25px; }
.r-root { height: 26px; }
.r-area { height: 69.500px; }
.r-last { border-bottom: 0; }
.ta { width: 100%; height: 61px; background: #fff; border: 1px solid #bcbcbc; border-right: 0; border-radius: 2px 0 0 2px; }
.sel-no { width: 54px; height: 14px; border: 2px solid #111; border-radius: 3px; display: flex; align-items: center; justify-content: space-between; padding: 0 4px 0 5px; color: #333; line-height: 10px; }
.sel-root { width: 592px; height: 16px; border: 1px solid #bbb; border-radius: 2px; display: flex; align-items: center; justify-content: space-between; padding: 0 5px; color: #222; letter-spacing: 1.100px; }

.pagefoot { flex: none; margin-top: 7px; height: 56px; background: #003f72; display: flex; align-items: center; color: #fff; }
.foot-text { margin: 5px 0 0 33px; font-family: "Lato", sans-serif; font-weight: 700; font-size: 11.400px; word-spacing: .3px; color: #f2f5f8; white-space: nowrap; }
.foot-logo { margin-left: auto; width: 249px; height: 52px; align-self: flex-end; border-top: 1px solid #2f6a9a; border-right: 1px solid #2f6a9a; display: flex; align-items: center; padding-left: 17px; gap: 10px; }
.foot-brand { font-family: "Open Sans", sans-serif; font-style: italic; font-weight: 600; font-size: 26.500px; color: #e8eef4; white-space: nowrap; }

.vscroll { flex: none; width: 18px; background: #f0f0f0; display: flex; flex-direction: column; align-items: center; padding: 5px 0; }
.thumb { width: 15px; height: 21px; margin-top: 285px; margin-bottom: auto; background: #cdcdcd; }

/* right panel */
.panel { flex: none; width: 229px; background: #eee; border-left: 1px solid #333; display: flex; flex-direction: column; font-size: 11.500px; color: #444; }
.signin { height: 20px; flex: none; text-align: right; padding-right: 17px; line-height: 17px; background: linear-gradient(#eaf5ff, #d9ecfc); border-bottom: 1px solid #8a8a8a; color: #1a1ad0; }
.sect { height: 27px; flex: none; display: flex; align-items: center; font-size: 12.800px; font-weight: 700; color: #444; background: linear-gradient(#e9e9e9, #c6c6c6); border-top: 1px solid #888; padding-left: 10px; gap: 8px; }
.sect-open { border-top: 0; height: 27px; padding-bottom: 2px; border-bottom: 1px solid #999; gap: 5px; }
.sect-last { height: 28px; padding-bottom: 1px; }
.tri-down { width: 0; height: 0; border: 4px solid transparent; border-top: 6px solid #444; border-bottom: 0; }
.tri-right { width: 0; height: 0; border: 4px solid transparent; border-left: 6px solid #444; border-right: 0; }
.export { flex: none; height: 320px; padding: 12px 10px 0 10px; }
.ex-head { display: flex; justify-content: space-between; padding-right: 2px; height: 17px; align-items: center; }
.ex-desc { margin: 3px 0 0; width: 190px; line-height: 13px; font-size: 11px; }
.ex-link { color: #1a1ad0; line-height: 13px; }
.ex-select { margin-top: 11px; }
.filebox { margin-top: 4px; width: 209px; height: 25px; background: #fff; border: 1px solid #aaa; display: flex; align-items: center; gap: 5px; padding: 0 0 4px 3px; white-space: nowrap; }
.filebox svg { margin-top: 4px; }
.filesize { margin-top: 5px; width: 209px; text-align: right; line-height: 14px; }
.ex-label { margin-top: 17px; line-height: 14px; }
.convsel { margin-top: 1px; width: 208px; height: 22px; display: flex; justify-content: space-between; align-items: center; padding: 0 8px; background: linear-gradient(#f2f2f2, #dedede); border: 1px solid #999; }
.caret-light { border-top-color: #666; }
.ex-rec { margin-top: 24px; line-height: 14px; }
.ex-change { line-height: 9px; }
.convert { margin: 38px 0 0 54px; width: 101px; height: 26px; line-height: 24px; text-align: center; background: linear-gradient(#f7f7f7, #e4e4e4); border: 1px solid #8f8f8f; }
.hatch { flex: 1; background: repeating-linear-gradient(135deg, #cfcfcf 0 2px, #e6e6e6 2px 4px); border-top: 1px solid #666; }

/* taskbar */
.taskbar { height: 40px; flex: none; display: flex; background: linear-gradient(90deg, #1f3a44, #223442 50%, #1d2b41); color: #fff; }
.start { width: 48px; display: flex; align-items: center; justify-content: center; }
.search { width: 344px; background: #f0f0f0; border-top: 1px solid #ccc; display: flex; align-items: center; padding: 0 0 2px 12px; gap: 10px; font-size: 14px; color: #333; }
.taskview { width: 50px; display: flex; align-items: center; justify-content: center; padding-right: 2px; }
.slot { flex: none; width: 49px; display: flex; flex-direction: column; align-items: center; }
.slot-ico { height: 38px; display: flex; align-items: center; justify-content: center; position: relative; }
.slot-down { padding-top: 3px; }
.bar { width: 40px; height: 2px; background: #76b9ed; }
.bar-none { visibility: hidden; }
.slot-active { background: #4a5f68; }
.slot-active .bar { width: 100%; }
.teams-badge { position: absolute; right: 0; bottom: 5px; font-size: 11px; color: #fff; font-family: "Liberation Sans", sans-serif; }
.tray { margin-left: auto; display: flex; align-items: center; font-size: 11.500px; position: relative; }
.t-news { margin-right: 25px; }
.t-caret { margin-right: 10px; }
.t-mon { margin-right: 8px; }
.t-net { margin-right: 8px; }
.t-vol { margin-right: 12px; }
.t-pen { margin-right: 11px; }
.clock { width: 60px; display: flex; flex-direction: column; align-items: center; line-height: 18px; white-space: nowrap; }
.notif { margin-left: 13px; width: 36px; height: 40px; position: relative; padding-top: 12px; }
.notif-badge { position: absolute; left: 8px; top: 19px; width: 21px; height: 17px; border-radius: 9px; border: 1px solid #888; background: #333c4c; font-size: 12px; line-height: 15px; text-align: center; }
.showdesk { width: 1px; height: 40px; margin-left: -1px; margin-right: 5px; background: #4a5566; }
```
